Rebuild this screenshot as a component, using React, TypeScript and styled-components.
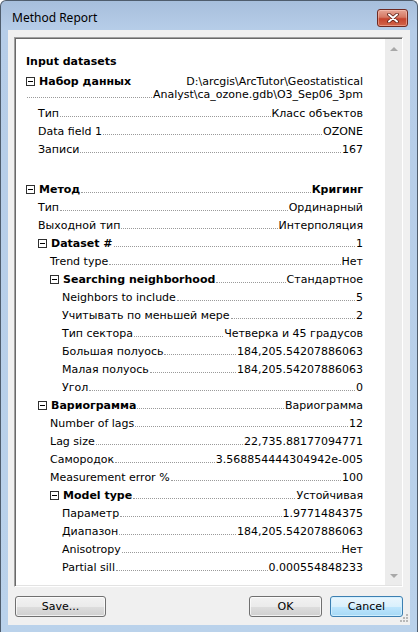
import styled, { createGlobalStyle } from "styled-components";

const GlobalStyle = createGlobalStyle`
  html, body {
    margin: 0;
    padding: 0;
    background: #ffffff;
  }
  body {
    font-family: "DejaVu Sans", Tahoma, sans-serif;
    font-size: 11px;
    color: #000;
  }
`

const Window = styled.div`
  width: 418px;
  height: 632px;
  box-sizing: border-box;
  display: flex;
  flex-direction: column;
  border: 1px solid #4f5d6d;
  border-bottom: none;
  border-radius: 6px 6px 0 0;
  background: linear-gradient(180deg, #a7bfdc 0px, #b6cde8 28px, #bad2eb 100%);
  overflow: hidden;
`

const TitleBar = styled.div`
  height: 29px;
  box-sizing: border-box;
  display: flex;
  align-items: flex-start;
  justify-content: space-between;
  padding: 8px 9px 0 11px;
`

const Title = styled.span`
  font-family: "Noto Sans", "Open Sans", sans-serif;
  font-size: 12px;
  line-height: 18px;
  color: #000;
`

const CloseButton = styled.div`
  width: 31px;
  height: 18px;
  box-sizing: border-box;
  border: 1px solid #6e2a22;
  border-radius: 3px;
  background: linear-gradient(180deg, #e7a595 0%, #d57863 45%, #c5442e 55%, #d2654a 100%);
  box-shadow: inset 0 0 0 1px rgba(255, 210, 200, 0.45);
  display: flex;
  align-items: center;
  justify-content: center;
`

const Client = styled.div`
  position: relative;
  flex: 1;
  margin: 0 7px 7px 7px;
  padding: 7px 7px 8px 6px;
  background: #f0f0f0;
  display: flex;
  flex-direction: column;
`

const ListBox = styled.div`
  flex: 1;
  display: flex;
  background: #fff;
  border: 1px solid;
  border-color: #a0a0a0 #ffffff #ffffff #a0a0a0;
  box-shadow: inset 1px 1px 0 #696969, inset -1px -1px 0 #e3e3e3;
  min-height: 0;
`

const Report = styled.div`
  flex: 1;
  padding: 14px 22px 0 11px;
  overflow: hidden;
`

const ScrollBar = styled.div`
  width: 17px;
  margin: 1px 0 1px 0;
  background: #ececec;
  display: flex;
  flex-direction: column;
  justify-content: space-between;
  align-items: center;
`

const Arrow = styled.div<{ $down?: boolean }>`
  width: 0;
  height: 0;
  margin: ${(p) => (p.$down ? "0 0 7px 0" : "8px 0 0 0")};
  border-left: 4px solid transparent;
  border-right: 4px solid transparent;
  ${(p) =>
    p.$down
      ? "border-top: 4px solid #a8a8a8;"
      : "border-bottom: 4px solid #a8a8a8;"}
`

const Heading = styled.div`
  height: 20px;
  line-height: 20px;
  font-weight: bold;
`

const Row = styled.div<{ $level: number; $gap?: boolean }>`
  height: 18px;
  box-sizing: border-box;
  display: flex;
  align-items: flex-end;
  padding: 0 0 2px ${(p) => p.$level * 12}px;
  margin-top: ${(p) => (p.$gap ? "22px" : "0")};
  white-space: nowrap;
`

const WrapRow = styled.div<{ $level: number }>`
  display: flex;
  flex-direction: column;
  padding: 3px 0 3px ${(p) => p.$level * 12}px;
  white-space: nowrap;
`

const Line = styled.div`
  display: flex;
  align-items: flex-end;
  line-height: 12px;
`

const Label = styled.span<{ $bold?: boolean }>`
  line-height: 13px;
  font-weight: ${(p) => (p.$bold ? "bold" : "normal")};
`

const Value = styled.span<{ $bold?: boolean }>`
  line-height: 13px;
  font-weight: ${(p) => (p.$bold ? "bold" : "normal")};
`

const Leader = styled.span`
  flex: 1;
  height: 0;
  margin: 0 1px 3px 1px;
  border-bottom: 1px dotted #9a9a9a;
`

const Spacer = styled.span`
  flex: 1;
`

const Toggle = styled.span`
  position: relative;
  flex: none;
  width: 9px;
  height: 9px;
  box-sizing: border-box;
  border: 1px solid #2f2f2f;
  margin: 0 4px 2px 0;

  &::after {
    content: "";
    position: absolute;
    left: 1px;
    top: 3px;
    width: 5px;
    height: 1px;
    background: #000;
  }
`

const ButtonBar = styled.div`
  display: flex;
  align-items: center;
  gap: 8px;
  margin-top: 9px;
  padding-left: 1px;
`

const Button = styled.button<{ $wide?: boolean; $default?: boolean }>`
  width: ${(p) => (p.$wide ? "91px" : "73px")};
  height: 21px;
  padding: 0;
  font-family: "DejaVu Sans", Tahoma, sans-serif;
  font-size: 11px;
  color: #000;
  border-radius: 3px;
  border: 1px solid ${(p) => (p.$default ? "#3c7fb1" : "#707070")};
  background: ${(p) =>
    p.$default
      ? "linear-gradient(180deg, #eaf6fd 0%, #d9f0fc 50%, #bee6fd 51%, #a7d9f5 100%)"
      : "linear-gradient(180deg, #f2f2f2 0%, #ebebeb 50%, #dddddd 51%, #cfcfcf 100%)"};
  box-shadow: inset 0 0 0 1px ${(p) => (p.$default ? "rgba(210, 240, 255, 0.9)" : "rgba(255, 255, 255, 0.7)")};
`

const Grow = styled.div`
  flex: 1;
`

const Grip = styled.svg`
  position: absolute;
  right: 1px;
  bottom: 2px;
`

type Item =
  | { kind: "title"; label: string }
  | { kind: "wrap"; level: number; label: string; lines: string[] }
  | { kind: "group"; level: number; label: string; value: string; strong?: boolean; gap?: boolean }
  | { kind: "field"; level: number; label: string; value: string };

const items: Item[] = [
  { kind: "title", label: "Input datasets" },
  {
    kind: "wrap",
    level: 0,
    label: "Набор данных",
    lines: ["D:\\arcgis\\ArcTutor\\Geostatistical", "Analyst\\ca_ozone.gdb\\O3_Sep06_3pm"],
  },
  { kind: "field", level: 1, label: "Тип", value: "Класс объектов" },
  { kind: "field", level: 1, label: "Data field 1", value: "OZONE" },
  { kind: "field", level: 1, label: "Записи", value: "167" },
  { kind: "group", level: 0, label: "Метод", value: "Кригинг", strong: true, gap: true },
  { kind: "field", level: 1, label: "Тип", value: "Ординарный" },
  { kind: "field", level: 1, label: "Выходной тип", value: "Интерполяция" },
  { kind: "group", level: 1, label: "Dataset #", value: "1" },
  { kind: "field", level: 2, label: "Trend type", value: "Нет" },
  { kind: "group", level: 2, label: "Searching neighborhood", value: "Стандартное" },
  { kind: "field", level: 3, label: "Neighbors to include", value: "5" },
  { kind: "field", level: 3, label: "Учитывать по меньшей мере", value: "2" },
  { kind: "field", level: 3, label: "Тип сектора", value: "Четверка и 45 градусов" },
  { kind: "field", level: 3, label: "Большая полуось", value: "184,205.54207886063" },
  { kind: "field", level: 3, label: "Малая полуось", value: "184,205.54207886063" },
  { kind: "field", level: 3, label: "Угол", value: "0" },
  { kind: "group", level: 1, label: "Вариограмма", value: "Вариограмма" },
  { kind: "field", level: 2, label: "Number of lags", value: "12" },
  { kind: "field", level: 2, label: "Lag size", value: "22,735.88177094771" },
  { kind: "field", level: 2, label: "Самородок", value: "3.568854444304942e-005" },
  { kind: "field", level: 2, label: "Measurement error %", value: "100" },
  { kind: "group", level: 2, label: "Model type", value: "Устойчивая" },
  { kind: "field", level: 3, label: "Параметр", value: "1.9771484375" },
  { kind: "field", level: 3, label: "Диапазон", value: "184,205.54207886063" },
  { kind: "field", level: 3, label: "Anisotropy", value: "Нет" },
  { kind: "field", level: 3, label: "Partial sill", value: "0.000554848233" },
];

function ReportItem({ item }: { item: Item }) {
  if (item.kind === "title") {
    return <Heading>{item.label}</Heading>;
  }
  if (item.kind === "wrap") {
    const [first, ...rest] = item.lines;
    return (
      <WrapRow $level={item.level}>
        <Line>
          <Toggle />
          <Label $bold>{item.label}</Label>
          <Spacer />
          <Value>{first}</Value>
        </Line>
        {rest.map((text) => (
          <Line key={text}>
            <Leader />
            <Value>{text}</Value>
          </Line>
        ))}
      </WrapRow>
    );
  }
  if (item.kind === "group") {
    return (
      <Row $level={item.level} $gap={item.gap}>
        <Toggle />
        <Label $bold>{item.label}</Label>
        <Leader />
        <Value $bold={item.strong}>{item.value}</Value>
      </Row>
    );
  }
  return (
    <Row $level={item.level}>
      <Label>{item.label}</Label>
      <Leader />
      <Value>{item.value}</Value>
    </Row>
  );
}

function App() {
  return (
    <>
      <GlobalStyle />
      <Window>
        <TitleBar>
          <Title>Method Report</Title>
          <CloseButton>
            <svg width="12" height="10" viewBox="0 0 12 10">
              <path d="M2 1.5 L10 8.5 M10 1.5 L2 8.5" stroke="#5a1d14" strokeWidth="3.6" strokeLinecap="round" />
              <path d="M2 1.5 L10 8.5 M10 1.5 L2 8.5" stroke="#ffffff" strokeWidth="2" strokeLinecap="round" />
            </svg>
          </CloseButton>
        </TitleBar>
        <Client>
          <ListBox>
            <Report>
              {items.map((item, i) => (
                <ReportItem key={i} item={item} />
              ))}
            </Report>
            <ScrollBar>
              <Arrow />
              <Arrow $down />
            </ScrollBar>
          </ListBox>
          <ButtonBar>
            <Button $wide>Save...</Button>
            <Grow />
            <Button>OK</Button>
            <Button $default>Cancel</Button>
          </ButtonBar>
          <Grip width="9" height="9" viewBox="0 0 9 9">
            {[
              [6, 0],
              [3, 3],
              [6, 3],
              [0, 6],
              [3, 6],
              [6, 6],
            ].map(([x, y]) => (
              <rect key={`${x}-${y}`} x={x} y={y} width="2" height="2" fill="#b8b8b8" />
            ))}
          </Grip>
        </Client>
      </Window>
    </>
  );
}

export default App;
